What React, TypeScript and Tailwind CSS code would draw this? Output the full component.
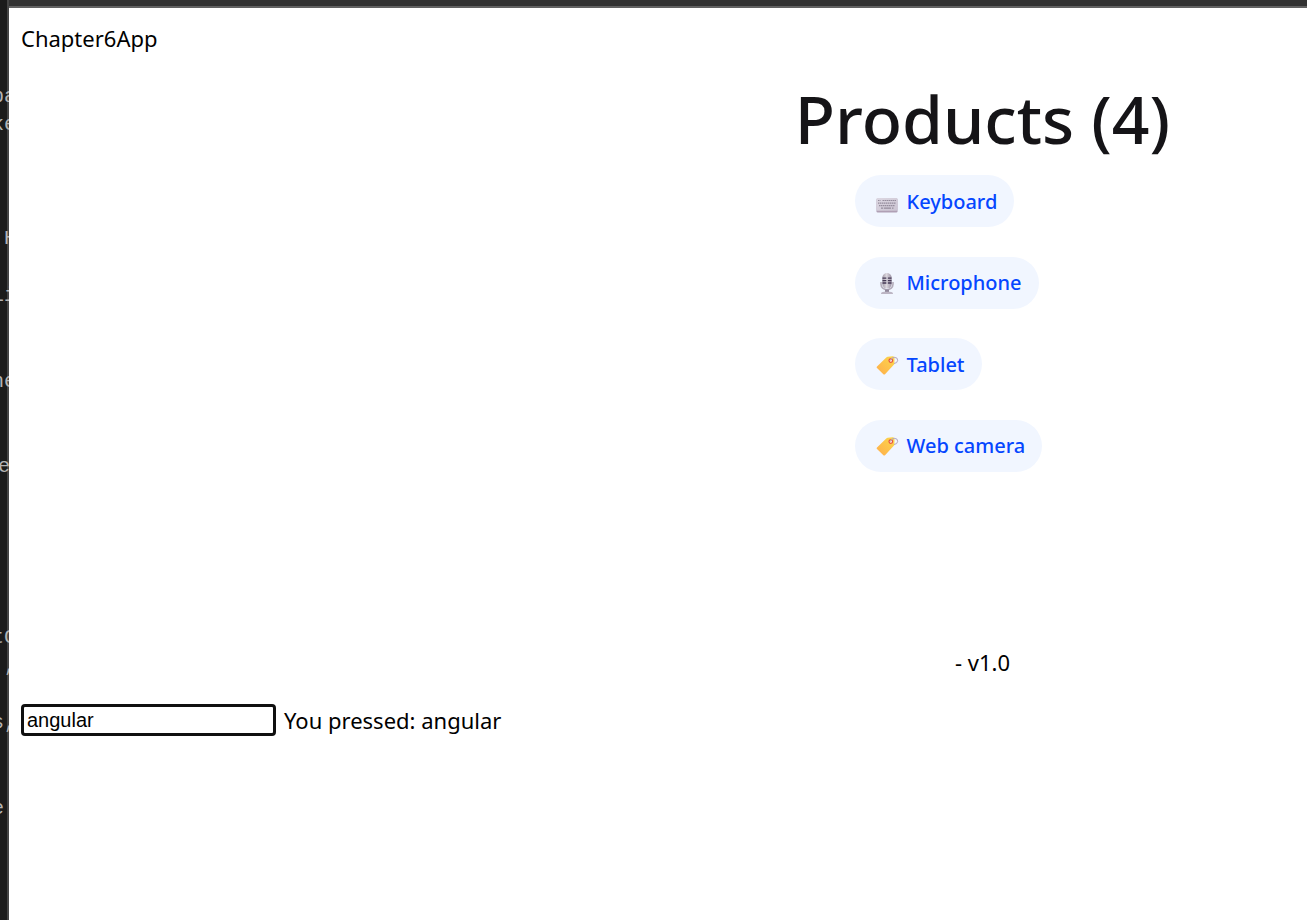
import { useState } from "react";

function KeyboardIcon() {
  return (
    <svg width="24" height="24" viewBox="0 0 24 24" aria-hidden="true">
      <defs>
        <linearGradient id="keyboardBody" x1="0" y1="0" x2="1" y2="1">
          <stop offset="0" stopColor="#dcd7e2" />
          <stop offset="1" stopColor="#cbc4d2" />
        </linearGradient>
      </defs>
      <g transform="translate(0 1.5)">
        <rect x="1.5" y="7" width="21" height="14" rx="1.2" fill="#b0a0b5" />
        <rect x="1.5" y="6.5" width="21" height="12.8" rx="1.2" fill="url(#keyboardBody)" />
        <g stroke="#948c9c" strokeWidth="1.1" strokeDasharray="1.5 0.5">
          <path d="M3 9h2.5M7.5 9H21" />
          <path d="M3 11.6h18" />
          <path d="M4 14.1h16" />
        </g>
        <path d="M6 16.6h2.2M9 16.6h7M17 16.6h1.5" stroke="#948c9c" strokeWidth="1.1" />
      </g>
    </svg>
  );
}

function MicrophoneIcon() {
  return (
    <svg width="24" height="24" viewBox="0 0 24 24" aria-hidden="true">
      <defs>
        <linearGradient id="micBody" x1="0" y1="0" x2="1" y2="0">
          <stop offset="0" stopColor="#a29aa7" />
          <stop offset="0.45" stopColor="#dcd8df" />
          <stop offset="1" stopColor="#9a90a2" />
        </linearGradient>
      </defs>
      <path d="M6 11v2.3a6 5.5 0 0 0 12 0V11" fill="none" stroke="#b3acba" strokeWidth="1.6" />
      <rect x="10" y="18.5" width="4" height="3" fill="#91889b" />
      <path d="M6 23q0-2.2 3.2-2.2h5.6q3.2 0 3.2 2.2z" fill="#bcb5c4" />
      <rect x="7.3" y="2" width="9.4" height="15.6" rx="4.7" fill="url(#micBody)" />
      <path d="M7.5 7.2h4M12.7 7.2h3.8M7.5 9.6h4M12.7 9.6h3.8M7.5 12h4M12.7 12h3.8" stroke="#453a55" strokeWidth="1.3" />
      <path d="M12.1 5.5v7.4" stroke="#c9c3d0" strokeWidth="1" />
    </svg>
  );
}

function TagIcon() {
  return (
    <svg width="24" height="24" viewBox="0 0 24 24" aria-hidden="true">
      <defs>
        <linearGradient id="tagBody" x1="1" y1="0" x2="0" y2="1">
          <stop offset="0" stopColor="#fbd84b" />
          <stop offset="1" stopColor="#ffad4c" />
        </linearGradient>
      </defs>
      <path
        d="M2 13.4 11.3 4.4q.6-.5 1.4-.6l5-.6q1.8-.1 1.8 1.6l-.1 5.6q0 .8-.6 1.4l-8.8 9.4q-.8.8-1.6 0l-6.4-6.2q-.9-.8 0-1.6z"
        fill="url(#tagBody)"
      />
      <circle cx="15.8" cy="7.6" r="1.8" fill="#fff0df" stroke="#e6503c" strokeWidth="1.2" />
      <path d="M15.6 7.6q.3-3 3.6-3.3 3.6 0 3.5 3-.3 3-3.7 3.2" fill="none" stroke="#b5a5bd" strokeWidth="1" />
    </svg>
  );
}

const products = [
  { name: "Keyboard", Icon: KeyboardIcon },
  { name: "Microphone", Icon: MicrophoneIcon },
  { name: "Tablet", Icon: TagIcon },
  { name: "Web camera", Icon: TagIcon },
];

const codeLines = [
  "pa", "ke", "", "", "", " H", "", "li", "", "", "ne", "", "", "e",
  "", "", "", "", "", "tC", " ,", "", "s,", "", "", "e ",
];

function EditorEdge() {
  return (
    <aside
      aria-hidden="true"
      className="w-[9px] shrink-0 overflow-hidden bg-[linear-gradient(to_right,#1b1b1b_7px,#444444_7px)] pt-[83px]"
    >
      <div className="grid h-[740px] auto-rows-fr font-['Liberation_Mono',monospace] text-xl leading-7 text-[#b4b4b4]">
        {codeLines.map((line, index) => (
          <div key={index} className={line.length === 1 ? "-ml-0.5 whitespace-pre" : "-ml-2 whitespace-pre"}>
            {line}
          </div>
        ))}
      </div>
    </aside>
  );
}

export default function App() {
  const [text, setText] = useState("angular");

  return (
    <div className="flex min-h-screen bg-white font-['Noto_Sans','Open_Sans',sans-serif] text-black">
      <EditorEdge />
      <div className="min-w-0 flex-1">
        <div className="h-2 border-b-2 border-[#626262] bg-[#323232]" />
        <div className="px-3 pt-3 text-[22px] leading-9">Chapter6App</div>

        <main className="grid grid-cols-2">
          <section className="col-start-2 flex flex-col items-center pt-[23px]">
            <h1 className="text-[66px] leading-[78px] font-medium whitespace-nowrap text-[#151417]">
              Products (4)
            </h1>
            <ul className="mt-[18px] flex h-[297px] w-[256px] flex-col items-start justify-between">
              {products.map(({ name, Icon }) => (
                <li
                  key={name}
                  className="flex h-[52px] items-center gap-2 rounded-full bg-[#f1f6ff] pt-px pr-[17px] pl-5 text-xl font-medium whitespace-nowrap text-[#0546ff]"
                >
                  <Icon />
                  <span>{name}</span>
                </li>
              ))}
            </ul>
          </section>
        </main>

        <footer className="grid grid-cols-2 pt-[172px] text-[22px] leading-9">
          <p className="col-start-2 text-center">- v1.0</p>
        </footer>

        <div className="flex items-center gap-2 px-3 pt-[22px] text-[22px] leading-9">
          <input
            type="text"
            aria-label="Key input"
            value={text}
            onChange={(event) => setText(event.target.value)}
            className="h-8 w-[255px] rounded-[4px] border-[3px] border-[#101010] bg-white px-[3px] font-['Liberation_Sans',sans-serif] text-xl leading-6 text-black outline-none"
          />
          <span>You pressed: {text}</span>
        </div>
      </div>
    </div>
  );
}
